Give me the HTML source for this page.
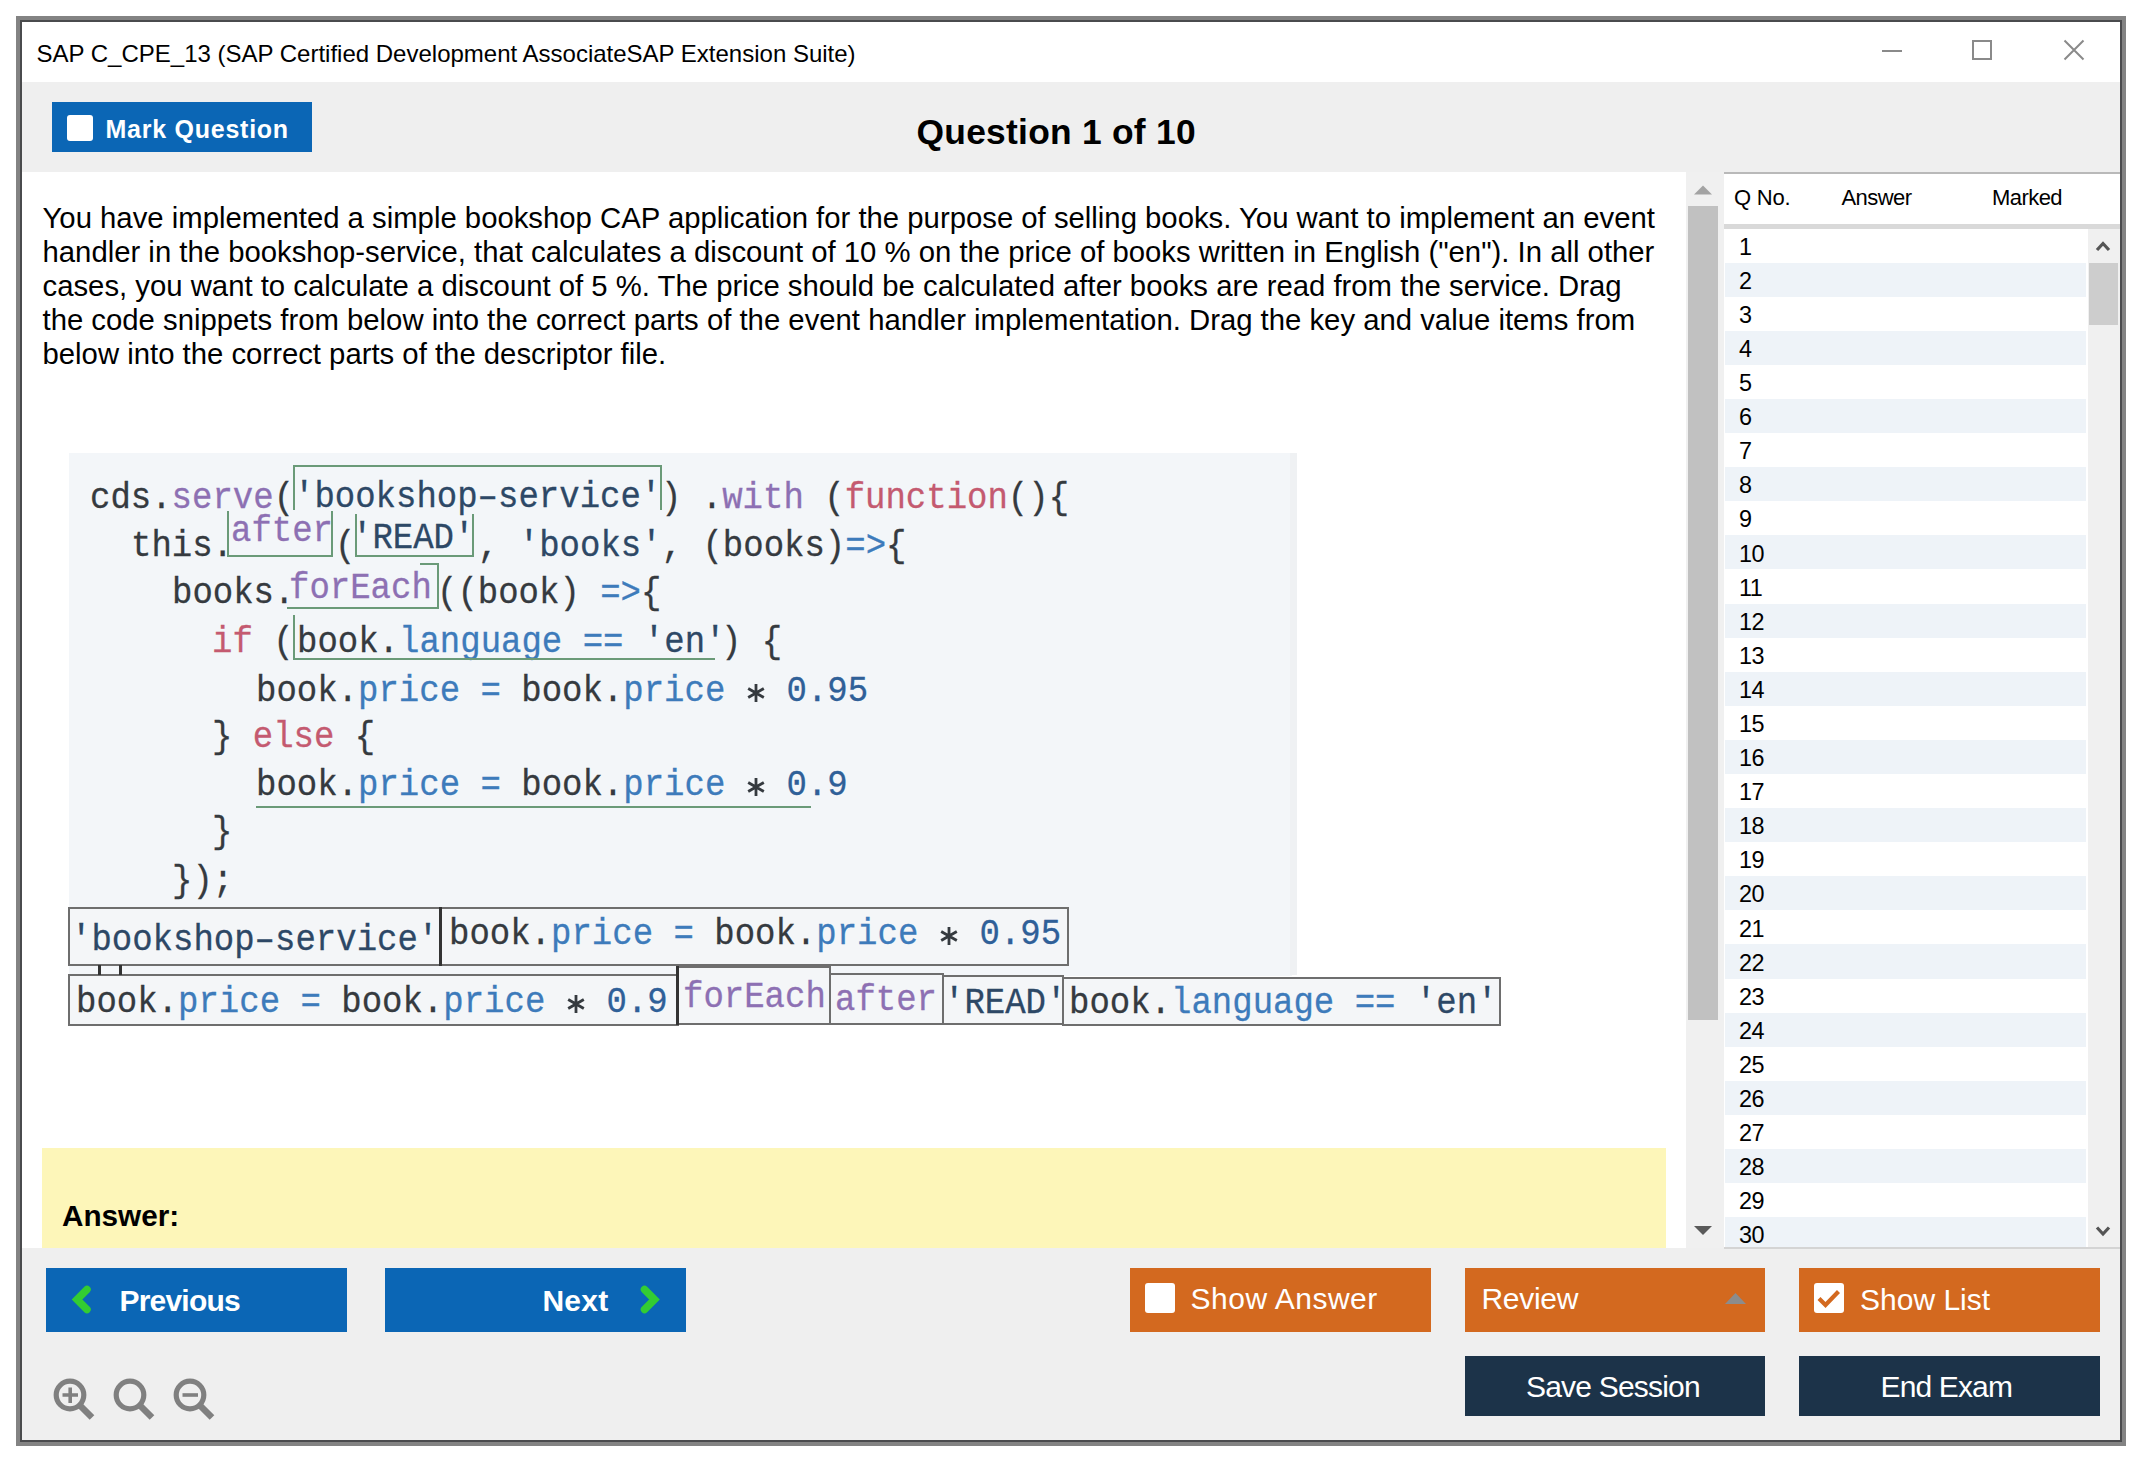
<!DOCTYPE html>
<html><head><meta charset="utf-8"><title>Exam</title>
<style>
html,body{margin:0;padding:0;background:#fff;}
body{width:2150px;height:1470px;overflow:hidden;position:relative;font-family:"Liberation Sans",sans-serif;}
body>div,body>svg{position:absolute;}
</style></head><body>
<div style="left:16px;top:16px;width:2110px;height:1430px;background:#838383"></div><div style="left:20px;top:20px;width:2102px;height:1422px;background:#4a4b4d"></div><div style="left:22px;top:22px;width:2098px;height:1418px;background:#ffffff"></div><div style="left:36.50px;top:42.10px;font-family:'Liberation Sans',sans-serif;font-size:24px;line-height:24px;font-weight:400;color:#000;white-space:pre;">SAP C_CPE_13 (SAP Certified Development AssociateSAP Extension Suite)</div><div style="left:1882px;top:50px;width:20px;height:2px;background:#8a8a8a"></div><div style="left:1972px;top:40px;width:20px;height:20px;border:2px solid #8a8a8a;box-sizing:border-box"></div><svg style="left:2062px;top:38px" width="24" height="24" viewBox="0 0 24 24"><path d="M2.5 2.5L21.5 21.5M21.5 2.5L2.5 21.5" stroke="#8a8a8a" stroke-width="2"/></svg><div style="left:22px;top:82px;width:2098px;height:90px;background:#efefef"></div><div style="left:52px;top:102px;width:260px;height:50px;background:#0b66b5"></div><div style="left:67px;top:115px;width:26px;height:26px;background:#fff;border-radius:3px"></div><div style="left:105.50px;top:116.75px;font-family:'Liberation Sans',sans-serif;font-size:25px;line-height:25px;font-weight:700;color:#fff;white-space:pre;letter-spacing:0.75px">Mark Question</div><div style="left:916.50px;top:114.91px;font-family:'Liberation Sans',sans-serif;font-size:35.4px;line-height:35.4px;font-weight:700;color:#000;white-space:pre;letter-spacing:0.25px">Question 1 of 10</div><div style="left:22px;top:172px;width:1664px;height:1076px;background:#ffffff"></div><div style="left:42.50px;top:203.09px;font-family:'Liberation Sans',sans-serif;font-size:29.3px;line-height:29.3px;font-weight:400;color:#000;white-space:pre;">You have implemented a simple bookshop CAP application for the purpose of selling books. You want to implement an event</div><div style="left:42.50px;top:237.09px;font-family:'Liberation Sans',sans-serif;font-size:29.3px;line-height:29.3px;font-weight:400;color:#000;white-space:pre;">handler in the bookshop-service, that calculates a discount of 10 % on the price of books written in English (&quot;en&quot;). In all other</div><div style="left:42.50px;top:271.10px;font-family:'Liberation Sans',sans-serif;font-size:29.3px;line-height:29.3px;font-weight:400;color:#000;white-space:pre;">cases, you want to calculate a discount of 5 %. The price should be calculated after books are read from the service. Drag</div><div style="left:42.50px;top:305.10px;font-family:'Liberation Sans',sans-serif;font-size:29.3px;line-height:29.3px;font-weight:400;color:#000;white-space:pre;">the code snippets from below into the correct parts of the event handler implementation. Drag the key and value items from</div><div style="left:42.50px;top:339.10px;font-family:'Liberation Sans',sans-serif;font-size:29.3px;line-height:29.3px;font-weight:400;color:#000;white-space:pre;">below into the correct parts of the descriptor file.</div><div style="left:69px;top:453px;width:1223px;height:523px;background:#f3f6f9"></div><div style="left:90.00px;top:481.44px;font-family:'Liberation Mono',monospace;font-size:36px;line-height:36px;font-weight:400;color:#353a3f;white-space:pre;transform:scaleX(0.9444);transform-origin:0 0;-webkit-text-stroke:0.3px currentColor"><span style="color:#353a3f">cds.</span><span style="color:#8d70b3">serve</span><span style="color:#353a3f">(</span></div><div style="left:294.00px;top:480.14px;font-family:'Liberation Mono',monospace;font-size:36px;line-height:36px;font-weight:400;color:#353a3f;white-space:pre;transform:scaleX(0.9444);transform-origin:0 0;-webkit-text-stroke:0.3px currentColor"><span style="color:#2d4866">&#x27;bookshop&#8211;service&#x27;</span></div><div style="left:661.20px;top:481.44px;font-family:'Liberation Mono',monospace;font-size:36px;line-height:36px;font-weight:400;color:#353a3f;white-space:pre;transform:scaleX(0.9444);transform-origin:0 0;-webkit-text-stroke:0.3px currentColor"><span style="color:#353a3f">) .</span><span style="color:#8d70b3">with</span><span style="color:#353a3f"> (</span><span style="color:#c45a70">function</span><span style="color:#353a3f">(){</span></div><div style="left:130.80px;top:528.64px;font-family:'Liberation Mono',monospace;font-size:36px;line-height:36px;font-weight:400;color:#353a3f;white-space:pre;transform:scaleX(0.9444);transform-origin:0 0;-webkit-text-stroke:0.3px currentColor"><span style="color:#353a3f">this.</span></div><div style="left:230.80px;top:513.94px;font-family:'Liberation Mono',monospace;font-size:36px;line-height:36px;font-weight:400;color:#353a3f;white-space:pre;transform:scaleX(0.9444);transform-origin:0 0;-webkit-text-stroke:0.3px currentColor"><span style="color:#8d70b3">after</span></div><div style="left:334.80px;top:528.64px;font-family:'Liberation Mono',monospace;font-size:36px;line-height:36px;font-weight:400;color:#353a3f;white-space:pre;transform:scaleX(0.9444);transform-origin:0 0;-webkit-text-stroke:0.3px currentColor"><span style="color:#353a3f">(</span></div><div style="left:352.20px;top:520.64px;font-family:'Liberation Mono',monospace;font-size:36px;line-height:36px;font-weight:400;color:#353a3f;white-space:pre;transform:scaleX(0.9444);transform-origin:0 0;-webkit-text-stroke:0.3px currentColor"><span style="color:#2d4866">&#x27;READ&#x27;</span></div><div style="left:477.60px;top:528.64px;font-family:'Liberation Mono',monospace;font-size:36px;line-height:36px;font-weight:400;color:#353a3f;white-space:pre;transform:scaleX(0.9444);transform-origin:0 0;-webkit-text-stroke:0.3px currentColor"><span style="color:#353a3f">, </span><span style="color:#2d4866">&#x27;books&#x27;</span><span style="color:#353a3f">, (books)</span><span style="color:#3d7bbb">=&gt;</span><span style="color:#353a3f">{</span></div><div style="left:171.60px;top:576.24px;font-family:'Liberation Mono',monospace;font-size:36px;line-height:36px;font-weight:400;color:#353a3f;white-space:pre;transform:scaleX(0.9444);transform-origin:0 0;-webkit-text-stroke:0.3px currentColor"><span style="color:#353a3f">books.</span></div><div style="left:289.00px;top:570.64px;font-family:'Liberation Mono',monospace;font-size:36px;line-height:36px;font-weight:400;color:#353a3f;white-space:pre;transform:scaleX(0.9444);transform-origin:0 0;-webkit-text-stroke:0.3px currentColor"><span style="color:#8d70b3">forEach</span></div><div style="left:436.80px;top:576.24px;font-family:'Liberation Mono',monospace;font-size:36px;line-height:36px;font-weight:400;color:#353a3f;white-space:pre;transform:scaleX(0.9444);transform-origin:0 0;-webkit-text-stroke:0.3px currentColor"><span style="color:#353a3f">((book) </span><span style="color:#3d7bbb">=&gt;</span><span style="color:#353a3f">{</span></div><div style="left:212.40px;top:624.64px;font-family:'Liberation Mono',monospace;font-size:36px;line-height:36px;font-weight:400;color:#353a3f;white-space:pre;transform:scaleX(0.9444);transform-origin:0 0;-webkit-text-stroke:0.3px currentColor"><span style="color:#c45a70">if</span><span style="color:#353a3f"> (</span></div><div style="left:296.50px;top:624.64px;font-family:'Liberation Mono',monospace;font-size:36px;line-height:36px;font-weight:400;color:#353a3f;white-space:pre;transform:scaleX(0.9444);transform-origin:0 0;-webkit-text-stroke:0.3px currentColor"><span style="color:#353a3f">book.</span><span style="color:#3d7bbb">language</span><span style="color:#3d7bbb"> == </span><span style="color:#2d4866">&#x27;en&#x27;</span></div><div style="left:720.90px;top:624.64px;font-family:'Liberation Mono',monospace;font-size:36px;line-height:36px;font-weight:400;color:#353a3f;white-space:pre;transform:scaleX(0.9444);transform-origin:0 0;-webkit-text-stroke:0.3px currentColor"><span style="color:#353a3f">) {</span></div><div style="left:255.70px;top:674.14px;font-family:'Liberation Mono',monospace;font-size:36px;line-height:36px;font-weight:400;color:#353a3f;white-space:pre;transform:scaleX(0.9444);transform-origin:0 0;-webkit-text-stroke:0.3px currentColor"><span style="color:#353a3f">book.</span><span style="color:#3d7bbb">price</span><span style="color:#3d7bbb"> = </span><span style="color:#353a3f">book.</span><span style="color:#3d7bbb">price</span><span style="color:#353a3f">   </span><span style="color:#2f6098">0.95</span></div><svg style="left:745.50px;top:682.50px" width="20" height="20" viewBox="-10 -10 20 20"><path d="M0 -9V9M-7.8 -4.5L7.8 4.5M-7.8 4.5L7.8 -4.5" stroke="#353a3f" stroke-width="2.8"/></svg><div style="left:212.40px;top:720.24px;font-family:'Liberation Mono',monospace;font-size:36px;line-height:36px;font-weight:400;color:#353a3f;white-space:pre;transform:scaleX(0.9444);transform-origin:0 0;-webkit-text-stroke:0.3px currentColor"><span style="color:#353a3f">} </span><span style="color:#c45a70">else</span><span style="color:#353a3f"> {</span></div><div style="left:255.70px;top:768.14px;font-family:'Liberation Mono',monospace;font-size:36px;line-height:36px;font-weight:400;color:#353a3f;white-space:pre;transform:scaleX(0.9444);transform-origin:0 0;-webkit-text-stroke:0.3px currentColor"><span style="color:#353a3f">book.</span><span style="color:#3d7bbb">price</span><span style="color:#3d7bbb"> = </span><span style="color:#353a3f">book.</span><span style="color:#3d7bbb">price</span><span style="color:#353a3f">   </span><span style="color:#2f6098">0.9</span></div><svg style="left:745.50px;top:776.50px" width="20" height="20" viewBox="-10 -10 20 20"><path d="M0 -9V9M-7.8 -4.5L7.8 4.5M-7.8 4.5L7.8 -4.5" stroke="#353a3f" stroke-width="2.8"/></svg><div style="left:212.40px;top:815.24px;font-family:'Liberation Mono',monospace;font-size:36px;line-height:36px;font-weight:400;color:#353a3f;white-space:pre;transform:scaleX(0.9444);transform-origin:0 0;-webkit-text-stroke:0.3px currentColor"><span style="color:#353a3f">}</span></div><div style="left:171.60px;top:863.64px;font-family:'Liberation Mono',monospace;font-size:36px;line-height:36px;font-weight:400;color:#353a3f;white-space:pre;transform:scaleX(0.9444);transform-origin:0 0;-webkit-text-stroke:0.3px currentColor"><span style="color:#353a3f">});</span></div><div style="left:293px;top:465px;width:369px;height:45px;box-sizing:border-box;border-top:2px solid #6a9a78;border-left:2px solid #6a9a78;"></div><div style="left:660px;top:465px;width:2px;height:45px;background:#6a9a78"></div><div style="left:227px;top:511px;width:106px;height:46px;box-sizing:border-box;border-left:2px solid #6a9a78;border-bottom:2px solid #6a9a78;border-right:2px solid #6a9a78;"></div><div style="left:355px;top:514px;width:119px;height:43px;box-sizing:border-box;border-left:2px solid #6a9a78;border-bottom:2px solid #6a9a78;border-right:2px solid #6a9a78;"></div><div style="left:287px;top:563px;width:152px;height:46px;box-sizing:border-box;border-bottom:2px solid #6a9a78;border-right:2px solid #6a9a78;"></div><div style="left:420px;top:563px;width:19px;height:2px;background:#6a9a78"></div><div style="left:293px;top:615px;width:422px;height:45px;box-sizing:border-box;border-left:2px solid #6a9a78;border-bottom:2px solid #6a9a78;"></div><div style="left:256px;top:806px;width:555px;height:2px;background:#6a9a78"></div><div style="left:1290px;top:453px;width:7px;height:522px;background:#eff1f3"></div><div style="left:68px;top:907px;width:374px;height:59px;box-sizing:border-box;border:2px solid #6e6e6e;background:#f4f6f8"></div><div style="left:440px;top:907px;width:629px;height:59px;box-sizing:border-box;border:2px solid #6e6e6e;background:#f4f6f8"></div><div style="left:439px;top:907px;width:3px;height:59px;background:#333"></div><div style="left:68px;top:974px;width:611px;height:52px;box-sizing:border-box;border:2px solid #6e6e6e;background:#f4f6f8"></div><div style="left:677px;top:966px;width:154px;height:59px;box-sizing:border-box;border:2px solid #6e6e6e;background:#f4f6f8"></div><div style="left:676px;top:966px;width:3px;height:59px;background:#333"></div><div style="left:829px;top:973px;width:115px;height:52px;box-sizing:border-box;border:2px solid #6e6e6e;background:#f4f6f8"></div><div style="left:942px;top:975px;width:122px;height:50px;box-sizing:border-box;border:2px solid #6e6e6e;background:#f4f6f8"></div><div style="left:1062px;top:977px;width:439px;height:49px;box-sizing:border-box;border:2px solid #6e6e6e;background:#f4f6f8"></div><div style="left:98px;top:965px;width:3px;height:10px;background:#333"></div><div style="left:119px;top:965px;width:3px;height:10px;background:#333"></div><div style="left:70.50px;top:922.64px;font-family:'Liberation Mono',monospace;font-size:36px;line-height:36px;font-weight:400;color:#353a3f;white-space:pre;transform:scaleX(0.9444);transform-origin:0 0;-webkit-text-stroke:0.3px currentColor"><span style="color:#2d4866">&#x27;bookshop&#8211;service&#x27;</span></div><div style="left:449.00px;top:917.34px;font-family:'Liberation Mono',monospace;font-size:36px;line-height:36px;font-weight:400;color:#353a3f;white-space:pre;transform:scaleX(0.9444);transform-origin:0 0;-webkit-text-stroke:0.3px currentColor"><span style="color:#353a3f">book.</span><span style="color:#3d7bbb">price</span><span style="color:#3d7bbb"> = </span><span style="color:#353a3f">book.</span><span style="color:#3d7bbb">price</span><span style="color:#353a3f">   </span><span style="color:#2f6098">0.95</span></div><svg style="left:938.80px;top:925.70px" width="20" height="20" viewBox="-10 -10 20 20"><path d="M0 -9V9M-7.8 -4.5L7.8 4.5M-7.8 4.5L7.8 -4.5" stroke="#353a3f" stroke-width="2.8"/></svg><div style="left:76.00px;top:985.24px;font-family:'Liberation Mono',monospace;font-size:36px;line-height:36px;font-weight:400;color:#353a3f;white-space:pre;transform:scaleX(0.9444);transform-origin:0 0;-webkit-text-stroke:0.3px currentColor"><span style="color:#353a3f">book.</span><span style="color:#3d7bbb">price</span><span style="color:#3d7bbb"> = </span><span style="color:#353a3f">book.</span><span style="color:#3d7bbb">price</span><span style="color:#353a3f">   </span><span style="color:#2f6098">0.9</span></div><svg style="left:565.80px;top:993.60px" width="20" height="20" viewBox="-10 -10 20 20"><path d="M0 -9V9M-7.8 -4.5L7.8 4.5M-7.8 4.5L7.8 -4.5" stroke="#353a3f" stroke-width="2.8"/></svg><div style="left:683.00px;top:980.24px;font-family:'Liberation Mono',monospace;font-size:36px;line-height:36px;font-weight:400;color:#353a3f;white-space:pre;transform:scaleX(0.9444);transform-origin:0 0;-webkit-text-stroke:0.3px currentColor"><span style="color:#8d70b3">forEach</span></div><div style="left:835.00px;top:983.24px;font-family:'Liberation Mono',monospace;font-size:36px;line-height:36px;font-weight:400;color:#353a3f;white-space:pre;transform:scaleX(0.9444);transform-origin:0 0;-webkit-text-stroke:0.3px currentColor"><span style="color:#8d70b3">after</span></div><div style="left:944.00px;top:986.14px;font-family:'Liberation Mono',monospace;font-size:36px;line-height:36px;font-weight:400;color:#353a3f;white-space:pre;transform:scaleX(0.9444);transform-origin:0 0;-webkit-text-stroke:0.3px currentColor"><span style="color:#2d4866">&#x27;READ&#x27;</span></div><div style="left:1068.50px;top:986.14px;font-family:'Liberation Mono',monospace;font-size:36px;line-height:36px;font-weight:400;color:#353a3f;white-space:pre;transform:scaleX(0.9444);transform-origin:0 0;-webkit-text-stroke:0.3px currentColor"><span style="color:#353a3f">book.</span><span style="color:#3d7bbb">language</span><span style="color:#3d7bbb"> == </span><span style="color:#2d4866">&#x27;en&#x27;</span></div><div style="left:42px;top:1148px;width:1624px;height:100px;background:#fdf6b9"></div><div style="left:62.00px;top:1200.76px;font-family:'Liberation Sans',sans-serif;font-size:29.7px;line-height:29.7px;font-weight:700;color:#000;white-space:pre;">Answer:</div><div style="left:1686px;top:172px;width:38px;height:1076px;background:#f0f0f0"></div><div style="left:1688px;top:206px;width:30px;height:814px;background:#c1c1c1"></div><svg style="left:1694px;top:185px" width="18" height="10"><path d="M0 9.5L9 0.5L18 9.5Z" fill="#a3a3a3"/></svg><svg style="left:1694px;top:1226px" width="18" height="10"><path d="M0 0L18 0L9 9Z" fill="#5a5a5a"/></svg><div style="left:1724px;top:172px;width:396px;height:2px;background:#b9b9b9"></div><div style="left:1724px;top:174px;width:396px;height:50px;background:#ffffff"></div><div style="left:1734.00px;top:187.30px;font-family:'Liberation Sans',sans-serif;font-size:22px;line-height:22px;font-weight:400;color:#000;white-space:pre;letter-spacing:-0.2px">Q No.</div><div style="left:1841.50px;top:187.30px;font-family:'Liberation Sans',sans-serif;font-size:22px;line-height:22px;font-weight:400;color:#000;white-space:pre;letter-spacing:-0.55px">Answer</div><div style="left:1992.00px;top:187.30px;font-family:'Liberation Sans',sans-serif;font-size:22px;line-height:22px;font-weight:400;color:#000;white-space:pre;letter-spacing:-0.55px">Marked</div><div style="left:1724px;top:224px;width:396px;height:5px;background:#d9d9d9"></div><div style="left:1724px;top:229px;width:364px;height:1018px;background:#ffffff"></div><div style="left:1739.00px;top:235.71px;font-family:'Liberation Sans',sans-serif;font-size:23.4px;line-height:23.4px;font-weight:400;color:#000;white-space:pre;letter-spacing:-0.6px">1</div><div style="left:1725px;top:262.69px;width:1361px;height:34.09px;background:#eef3f8;width:361px"></div><div style="left:1739.00px;top:269.80px;font-family:'Liberation Sans',sans-serif;font-size:23.4px;line-height:23.4px;font-weight:400;color:#000;white-space:pre;letter-spacing:-0.6px">2</div><div style="left:1739.00px;top:303.89px;font-family:'Liberation Sans',sans-serif;font-size:23.4px;line-height:23.4px;font-weight:400;color:#000;white-space:pre;letter-spacing:-0.6px">3</div><div style="left:1725px;top:330.87px;width:1361px;height:34.09px;background:#eef3f8;width:361px"></div><div style="left:1739.00px;top:337.98px;font-family:'Liberation Sans',sans-serif;font-size:23.4px;line-height:23.4px;font-weight:400;color:#000;white-space:pre;letter-spacing:-0.6px">4</div><div style="left:1739.00px;top:372.07px;font-family:'Liberation Sans',sans-serif;font-size:23.4px;line-height:23.4px;font-weight:400;color:#000;white-space:pre;letter-spacing:-0.6px">5</div><div style="left:1725px;top:399.05px;width:1361px;height:34.09px;background:#eef3f8;width:361px"></div><div style="left:1739.00px;top:406.16px;font-family:'Liberation Sans',sans-serif;font-size:23.4px;line-height:23.4px;font-weight:400;color:#000;white-space:pre;letter-spacing:-0.6px">6</div><div style="left:1739.00px;top:440.25px;font-family:'Liberation Sans',sans-serif;font-size:23.4px;line-height:23.4px;font-weight:400;color:#000;white-space:pre;letter-spacing:-0.6px">7</div><div style="left:1725px;top:467.23px;width:1361px;height:34.09px;background:#eef3f8;width:361px"></div><div style="left:1739.00px;top:474.34px;font-family:'Liberation Sans',sans-serif;font-size:23.4px;line-height:23.4px;font-weight:400;color:#000;white-space:pre;letter-spacing:-0.6px">8</div><div style="left:1739.00px;top:508.43px;font-family:'Liberation Sans',sans-serif;font-size:23.4px;line-height:23.4px;font-weight:400;color:#000;white-space:pre;letter-spacing:-0.6px">9</div><div style="left:1725px;top:535.41px;width:1361px;height:34.09px;background:#eef3f8;width:361px"></div><div style="left:1739.00px;top:542.52px;font-family:'Liberation Sans',sans-serif;font-size:23.4px;line-height:23.4px;font-weight:400;color:#000;white-space:pre;letter-spacing:-0.6px">10</div><div style="left:1739.00px;top:576.61px;font-family:'Liberation Sans',sans-serif;font-size:23.4px;line-height:23.4px;font-weight:400;color:#000;white-space:pre;letter-spacing:-0.6px">11</div><div style="left:1725px;top:603.59px;width:1361px;height:34.09px;background:#eef3f8;width:361px"></div><div style="left:1739.00px;top:610.70px;font-family:'Liberation Sans',sans-serif;font-size:23.4px;line-height:23.4px;font-weight:400;color:#000;white-space:pre;letter-spacing:-0.6px">12</div><div style="left:1739.00px;top:644.79px;font-family:'Liberation Sans',sans-serif;font-size:23.4px;line-height:23.4px;font-weight:400;color:#000;white-space:pre;letter-spacing:-0.6px">13</div><div style="left:1725px;top:671.77px;width:1361px;height:34.09px;background:#eef3f8;width:361px"></div><div style="left:1739.00px;top:678.88px;font-family:'Liberation Sans',sans-serif;font-size:23.4px;line-height:23.4px;font-weight:400;color:#000;white-space:pre;letter-spacing:-0.6px">14</div><div style="left:1739.00px;top:712.97px;font-family:'Liberation Sans',sans-serif;font-size:23.4px;line-height:23.4px;font-weight:400;color:#000;white-space:pre;letter-spacing:-0.6px">15</div><div style="left:1725px;top:739.95px;width:1361px;height:34.09px;background:#eef3f8;width:361px"></div><div style="left:1739.00px;top:747.06px;font-family:'Liberation Sans',sans-serif;font-size:23.4px;line-height:23.4px;font-weight:400;color:#000;white-space:pre;letter-spacing:-0.6px">16</div><div style="left:1739.00px;top:781.15px;font-family:'Liberation Sans',sans-serif;font-size:23.4px;line-height:23.4px;font-weight:400;color:#000;white-space:pre;letter-spacing:-0.6px">17</div><div style="left:1725px;top:808.13px;width:1361px;height:34.09px;background:#eef3f8;width:361px"></div><div style="left:1739.00px;top:815.24px;font-family:'Liberation Sans',sans-serif;font-size:23.4px;line-height:23.4px;font-weight:400;color:#000;white-space:pre;letter-spacing:-0.6px">18</div><div style="left:1739.00px;top:849.33px;font-family:'Liberation Sans',sans-serif;font-size:23.4px;line-height:23.4px;font-weight:400;color:#000;white-space:pre;letter-spacing:-0.6px">19</div><div style="left:1725px;top:876.31px;width:1361px;height:34.09px;background:#eef3f8;width:361px"></div><div style="left:1739.00px;top:883.42px;font-family:'Liberation Sans',sans-serif;font-size:23.4px;line-height:23.4px;font-weight:400;color:#000;white-space:pre;letter-spacing:-0.6px">20</div><div style="left:1739.00px;top:917.51px;font-family:'Liberation Sans',sans-serif;font-size:23.4px;line-height:23.4px;font-weight:400;color:#000;white-space:pre;letter-spacing:-0.6px">21</div><div style="left:1725px;top:944.49px;width:1361px;height:34.09px;background:#eef3f8;width:361px"></div><div style="left:1739.00px;top:951.60px;font-family:'Liberation Sans',sans-serif;font-size:23.4px;line-height:23.4px;font-weight:400;color:#000;white-space:pre;letter-spacing:-0.6px">22</div><div style="left:1739.00px;top:985.69px;font-family:'Liberation Sans',sans-serif;font-size:23.4px;line-height:23.4px;font-weight:400;color:#000;white-space:pre;letter-spacing:-0.6px">23</div><div style="left:1725px;top:1012.67px;width:1361px;height:34.09px;background:#eef3f8;width:361px"></div><div style="left:1739.00px;top:1019.78px;font-family:'Liberation Sans',sans-serif;font-size:23.4px;line-height:23.4px;font-weight:400;color:#000;white-space:pre;letter-spacing:-0.6px">24</div><div style="left:1739.00px;top:1053.87px;font-family:'Liberation Sans',sans-serif;font-size:23.4px;line-height:23.4px;font-weight:400;color:#000;white-space:pre;letter-spacing:-0.6px">25</div><div style="left:1725px;top:1080.85px;width:1361px;height:34.09px;background:#eef3f8;width:361px"></div><div style="left:1739.00px;top:1087.96px;font-family:'Liberation Sans',sans-serif;font-size:23.4px;line-height:23.4px;font-weight:400;color:#000;white-space:pre;letter-spacing:-0.6px">26</div><div style="left:1739.00px;top:1122.05px;font-family:'Liberation Sans',sans-serif;font-size:23.4px;line-height:23.4px;font-weight:400;color:#000;white-space:pre;letter-spacing:-0.6px">27</div><div style="left:1725px;top:1149.03px;width:1361px;height:34.09px;background:#eef3f8;width:361px"></div><div style="left:1739.00px;top:1156.14px;font-family:'Liberation Sans',sans-serif;font-size:23.4px;line-height:23.4px;font-weight:400;color:#000;white-space:pre;letter-spacing:-0.6px">28</div><div style="left:1739.00px;top:1190.23px;font-family:'Liberation Sans',sans-serif;font-size:23.4px;line-height:23.4px;font-weight:400;color:#000;white-space:pre;letter-spacing:-0.6px">29</div><div style="left:1725px;top:1217.21px;width:1361px;height:34.09px;background:#eef3f8;width:361px"></div><div style="left:1739.00px;top:1224.32px;font-family:'Liberation Sans',sans-serif;font-size:23.4px;line-height:23.4px;font-weight:400;color:#000;white-space:pre;letter-spacing:-0.6px">30</div><div style="left:2088px;top:229px;width:32px;height:1018px;background:#f0f0f0"></div><div style="left:2089px;top:263px;width:29px;height:62px;background:#cdcdcd"></div><svg style="left:2094px;top:238px" width="18" height="16"><path d="M3 12L9 5.5L15 12" stroke="#555" stroke-width="3.2" fill="none"/></svg><svg style="left:2094px;top:1224px" width="18" height="16"><path d="M3 3.5L9 10L15 3.5" stroke="#555" stroke-width="3.2" fill="none"/></svg><div style="left:22px;top:1248px;width:2098px;height:192px;background:#efefef"></div><div style="left:1724px;top:1247px;width:396px;height:2px;background:#d4d4d4"></div><div style="left:46px;top:1268px;width:301px;height:64px;background:#0b66b5"></div><svg style="left:66px;top:1280px" width="34" height="40"><path d="M21 9.5L11 19.5L21 29.5" stroke="#33cc33" stroke-width="7.5" fill="none" stroke-linejoin="miter" stroke-linecap="round"/></svg><div style="left:119.50px;top:1286.00px;font-family:'Liberation Sans',sans-serif;font-size:30px;line-height:30px;font-weight:700;color:#fff;white-space:pre;letter-spacing:-0.8px">Previous</div><div style="left:385px;top:1268px;width:301px;height:64px;background:#0b66b5"></div><div style="left:542.50px;top:1286.00px;font-family:'Liberation Sans',sans-serif;font-size:30px;line-height:30px;font-weight:700;color:#fff;white-space:pre;letter-spacing:0.2px">Next</div><svg style="left:632px;top:1280px" width="34" height="40"><path d="M12.5 9.5L22.5 19.5L12.5 29.5" stroke="#33cc33" stroke-width="7.5" fill="none" stroke-linejoin="miter" stroke-linecap="round"/></svg><svg style="left:50px;top:1375px" width="48" height="48" viewBox="0 0 48 48"><circle cx="20" cy="20" r="13.8" stroke="#808080" stroke-width="5.2" fill="none"/><path d="M29 29.5L42 42.5" stroke="#808080" stroke-width="6.5" stroke-linecap="butt"/><path d="M12.5 20H28M20.2 12.5V28" stroke="#808080" stroke-width="3.6"/></svg><svg style="left:110px;top:1375px" width="48" height="48" viewBox="0 0 48 48"><circle cx="20" cy="20" r="13.8" stroke="#808080" stroke-width="5.2" fill="none"/><path d="M29 29.5L42 42.5" stroke="#808080" stroke-width="6.5" stroke-linecap="butt"/></svg><svg style="left:170px;top:1375px" width="48" height="48" viewBox="0 0 48 48"><circle cx="20" cy="20" r="13.8" stroke="#808080" stroke-width="5.2" fill="none"/><path d="M29 29.5L42 42.5" stroke="#808080" stroke-width="6.5" stroke-linecap="butt"/><path d="M12.5 20H28" stroke="#808080" stroke-width="3.6"/></svg><div style="left:1130px;top:1268px;width:301px;height:64px;background:#d3691f"></div><div style="left:1145px;top:1283px;width:30px;height:30px;background:#fff;border-radius:3px"></div><div style="left:1190.50px;top:1284.00px;font-family:'Liberation Sans',sans-serif;font-size:30px;line-height:30px;font-weight:400;color:#fff;white-space:pre;letter-spacing:0.5px">Show Answer</div><div style="left:1465px;top:1268px;width:300px;height:64px;background:#d3691f"></div><div style="left:1481.50px;top:1284.00px;font-family:'Liberation Sans',sans-serif;font-size:30px;line-height:30px;font-weight:400;color:#fff;white-space:pre;letter-spacing:-0.3px">Review</div><svg style="left:1724px;top:1291px" width="23" height="14"><path d="M1 13L11.5 2L22 13Z" fill="#8c8c8c"/></svg><div style="left:1799px;top:1268px;width:301px;height:64px;background:#d3691f"></div><div style="left:1814px;top:1283px;width:30px;height:30px;background:#fff;border-radius:3px"></div><svg style="left:1814px;top:1283px" width="30" height="30"><path d="M5 15.5L11.5 22L24.5 8.5" stroke="#d3691f" stroke-width="4.2" fill="none"/></svg><div style="left:1860.00px;top:1284.50px;font-family:'Liberation Sans',sans-serif;font-size:30px;line-height:30px;font-weight:400;color:#fff;white-space:pre;">Show List</div><div style="left:1465px;top:1356px;width:300px;height:60px;background:#1c3349"></div><div style="left:1526.00px;top:1372.20px;font-family:'Liberation Sans',sans-serif;font-size:30px;line-height:30px;font-weight:400;color:#fff;white-space:pre;letter-spacing:-0.8px">Save Session</div><div style="left:1799px;top:1356px;width:301px;height:60px;background:#1c3349"></div><div style="left:1880.50px;top:1372.20px;font-family:'Liberation Sans',sans-serif;font-size:30px;line-height:30px;font-weight:400;color:#fff;white-space:pre;letter-spacing:-0.85px">End Exam</div>
</body></html>
